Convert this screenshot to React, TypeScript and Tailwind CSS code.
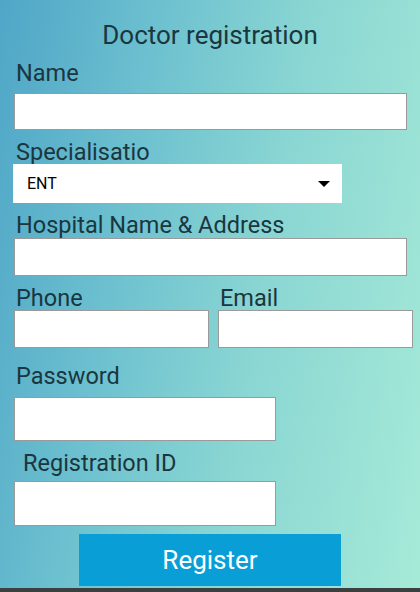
import React from 'react';

const font = { fontFamily: 'Roboto, "Noto Sans", sans-serif' };

function Field({ className }: { className: string }) {
  return <input className={`block bg-white border border-[#9a9a9a] outline-none ${className}`} />;
}

export default function App() {
  return (
    <div
      style={font}
      className="w-[420px] h-[592px] flex flex-col overflow-hidden bg-[linear-gradient(100deg,#4fa6c7_0%,#6cc0cf_30%,#8ad6d3_60%,#a6ead8_100%)] text-[#1a363e]"
    >
      <div className="flex-1 flex flex-col pl-[14px]">
        <h1 className="mt-[20px] h-[30px] leading-[30px] text-[26px] text-center pr-[14px]">Doctor registration</h1>

        <label className="mt-[11px] h-[24px] leading-[24px] text-[23.5px] pl-[2px]">Name</label>
        <Field className="mt-[8px] w-[393px] h-[37px]" />

        <label className="mt-[10px] h-[24px] leading-[24px] text-[23.5px] pl-[2px]">Specialisatio</label>
        <div className="-ml-px w-[329px] h-[39px] bg-white flex items-center justify-between pl-[14px] pr-[12px]">
          <span className="text-[16px] text-black">ENT</span>
          <svg width="12" height="6" viewBox="0 0 12 6"><path d="M0 0h12L6 6z" fill="#000" /></svg>
        </div>

        <label className="mt-[10px] h-[24px] leading-[24px] text-[23.5px] pl-[2px]">Hospital Name &amp; Address</label>
        <Field className="mt-px w-[393px] h-[38px]" />

        <div className="mt-[10px] flex gap-[9px]">
          <div className="flex flex-col">
            <label className="h-[24px] leading-[24px] text-[23.5px] pl-[2px]">Phone</label>
            <Field className="w-[195px] h-[38px]" />
          </div>
          <div className="flex flex-col">
            <label className="h-[24px] leading-[24px] text-[23.5px] pl-[2px]">Email</label>
            <Field className="w-[195px] h-[38px]" />
          </div>
        </div>

        <label className="mt-[16px] h-[24px] leading-[24px] text-[23.5px] pl-[2px]">Password</label>
        <Field className="mt-[9px] w-[262px] h-[44px]" />

        <label className="mt-[10px] h-[24px] leading-[24px] text-[23.5px] pl-[9px]">Registration ID</label>
        <Field className="mt-[6px] w-[262px] h-[45px]" />

        <button className="mt-[8px] ml-[65px] w-[262px] h-[52px] bg-[#0a9ed6] text-white text-[26px]">Register</button>
      </div>
      <div className="h-[4px] bg-[#3b3f40]" />
    </div>
  );
}
